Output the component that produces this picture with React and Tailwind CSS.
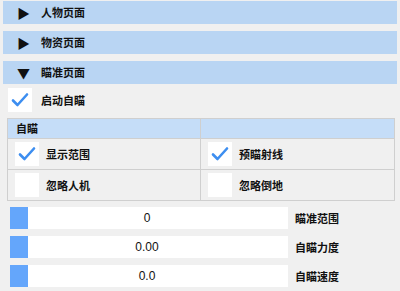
const font = { fontFamily: '"Noto Sans CJK SC", "Noto Sans", sans-serif' }

function Section({ open, title }) {
  return (
    <div className="mx-[3px] h-[23px] bg-[#b9d5f3] flex items-center text-[11px] font-bold text-[#111]">
      <span className="w-[38px] pl-[14px] text-[13px] leading-none">{open ? '▼' : '▶'}</span>
      <span>{title}</span>
    </div>
  )
}

function Check({ checked }) {
  return (
    <div className="w-[24px] h-[24px] bg-white flex items-center justify-center shrink-0">
      {checked && (
        <svg width="18" height="16" viewBox="0 0 18 16">
          <polyline points="2,8.5 6.5,13 16,2.5" fill="none" stroke="#3d8ef0" strokeWidth="2.6" strokeLinecap="round" strokeLinejoin="round" />
        </svg>
      )}
    </div>
  )
}

function Cell({ checked, label, last }) {
  return (
    <div className={`h-[30px] flex items-center gap-[7px] pl-[7px] ${last ? '' : 'border-r border-[#cfcfcf]'}`}>
      <Check checked={checked} />
      <span className="text-[11px] font-bold text-[#111]">{label}</span>
    </div>
  )
}

function Slider({ value, label }) {
  return (
    <div className="flex items-center h-[22px]">
      <div className="ml-[10px] w-[18px] h-[22px] bg-[#64a6fb]" />
      <div className="w-[260px] h-[22px] bg-white flex items-center justify-center pr-[22px] text-[12px] text-[#111]" style={{ fontFamily: '"Liberation Sans", sans-serif' }}>{value}</div>
      <span className="ml-[7px] text-[11px] font-bold text-[#111]">{label}</span>
    </div>
  )
}

export default function App() {
  return (
    <div className="w-[400px] h-[291px] bg-[#f0f0f0] pt-[1px] overflow-hidden" style={font}>
      <div className="flex flex-col gap-[7px]">
        <Section title="人物页面" />
        <Section title="物资页面" />
        <Section open title="瞄准页面" />
      </div>
      <div className="mt-[4px] ml-[8px] flex items-center gap-[9px]">
        <Check checked />
        <span className="text-[11px] font-bold text-[#111]">启动自瞄</span>
      </div>
      <div className="mt-[6px] ml-[7px] w-[388px] border border-[#cfcfcf]">
        <div className="grid grid-cols-[193px_1fr] h-[20px] bg-[#c5ddf8] border-b border-[#cfcfcf]">
          <div className="border-r border-[#cfcfcf] flex items-center pl-[8px] text-[11px] font-bold text-[#111]">自瞄</div>
          <div />
        </div>
        <div className="grid grid-cols-[193px_1fr] border-b border-[#cfcfcf]">
          <Cell checked label="显示范围" />
          <Cell checked label="预瞄射线" last />
        </div>
        <div className="grid grid-cols-[193px_1fr]">
          <Cell label="忽略人机" />
          <Cell label="忽略倒地" last />
        </div>
      </div>
      <div className="mt-[6px] flex flex-col gap-[7px]">
        <Slider value="0" label="瞄准范围" />
        <Slider value="0.00" label="自瞄力度" />
        <Slider value="0.0" label="自瞄速度" />
      </div>
    </div>
  )
}
